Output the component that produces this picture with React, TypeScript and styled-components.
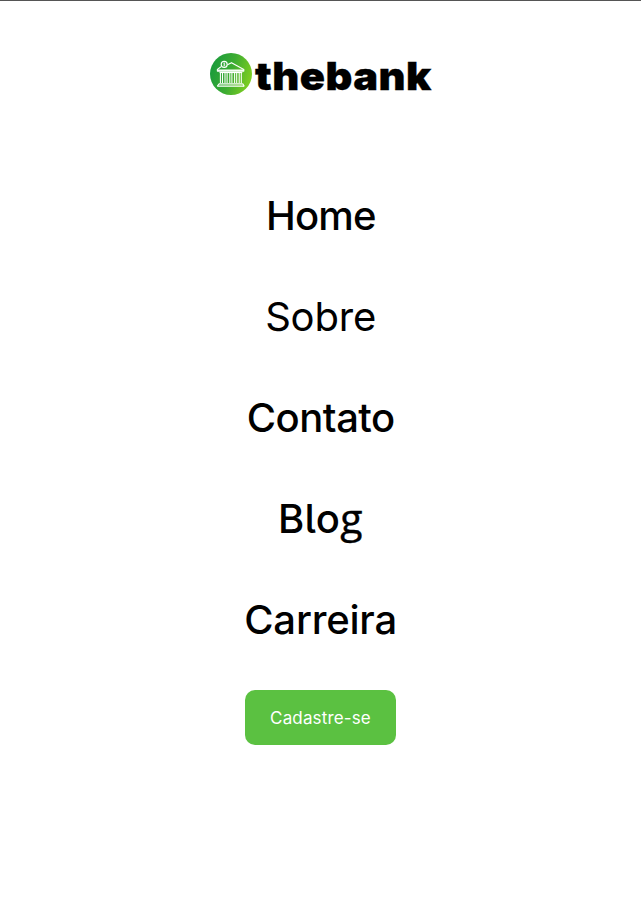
import React from "react";
import styled, { createGlobalStyle } from "styled-components";

const GlobalStyle = createGlobalStyle`
  * { box-sizing: border-box; }
  body {
    margin: 0;
    background: #fff;
    color: #000;
    font-family: Inter, "Liberation Sans", sans-serif;
  }
`;

const Page = styled.main`
  min-height: 910px;
  border-top: 1px solid #555;
  display: flex;
  flex-direction: column;
  align-items: center;
`;

const Brand = styled.a`
  display: flex;
  align-items: center;
  gap: 3px;
  width: 221px;
  height: 42px;
  margin-top: 52px;
  color: #000;
  text-decoration: none;
`;

const LogoIcon = styled.svg`
  display: block;
  flex: none;
  width: 42px;
  height: 42px;
`;

const BrandName = styled.span`
  font-size: 39px;
  font-weight: 900;
  line-height: 42px;
  letter-spacing: 0.4px;
  padding-top: 3px;
  transform: scaleX(1.068);
  transform-origin: left;
  -webkit-text-stroke: 0.3px #000;
`;

const Menu = styled.nav`
  display: flex;
  flex-direction: column;
  align-items: center;
  gap: 53px;
  margin-top: 97px;
`;

const MenuLink = styled.a<{ $weight: number; $spacing: number }>`
  color: #000;
  font-size: 40px;
  line-height: 48px;
  height: 48px;
  text-decoration: none;
  font-feature-settings: "cv05" 1;
  font-weight: ${(p) => p.$weight};
  letter-spacing: ${(p) => p.$spacing}px;
  margin-right: ${(p) => p.$spacing}px;
`;

/* Double-storey g, which the menu's main face does not have. */
const BinocularG = styled.span`
  font-family: "Open Sans", "Noto Sans", sans-serif;
  font-size: 41px;
  font-weight: 500;
  line-height: 1;
  -webkit-text-stroke: 0.4px #000;
`;

const SignUp = styled.button`
  width: 151px;
  height: 55px;
  margin-top: 46px;
  padding: 0;
  border: 0;
  border-radius: 10px;
  background: #5bc141;
  color: #fff;
  font: 400 17px/24px Inter, "Liberation Sans", sans-serif;
  letter-spacing: 0.15px;
`;

const links: { label: React.ReactNode; weight: number; spacing: number }[] = [
  { label: "Home", weight: 480, spacing: -0.8 },
  { label: "Sobre", weight: 400, spacing: -0.2 },
  { label: "Contato", weight: 480, spacing: -0.5 },
  { label: <>Blo<BinocularG>g</BinocularG></>, weight: 480, spacing: 0.3 },
  { label: "Carreira", weight: 480, spacing: -0.2 },
];

function BankLogo() {
  return (
    <LogoIcon viewBox="0 0 42 42" fill="none" aria-hidden="true">
      <defs>
        <linearGradient id="bank" x1="0" y1="0.3" x2="1" y2="0.6">
          <stop stopColor="#189a3c" />
          <stop offset="0.5" stopColor="#3dac32" />
          <stop offset="1" stopColor="#80cf20" />
        </linearGradient>
      </defs>
      <circle cx="21" cy="21" r="21" fill="url(#bank)" />
      <g stroke="#fff" strokeWidth="1.15" strokeLinejoin="round">
        <circle cx="14.2" cy="11.4" r="3" />
        <path d="M15.1 10.2h-1.3v1.1h1v1.3h-1.3M14.3 9.5v3.8" strokeWidth=".6" />
        <path d="M11 13.8 7.4 16.4v1.7h26.4v-1.7L21.5 9.7l-4 2" />
        <path d="M8 17.2h25.6" strokeWidth="1.4" />
        <path d="M9.5 19.5h22.8" />
        <path
          d="M10.4 20v10M12.5 20v10M15 20v10M17.1 20v10M19.8 20v10M21.9 20v10M24.6 20v10M26.7 20v10M29.2 20v10M31.3 20v10"
          strokeWidth="1.05"
        />
        <path d="M9 30.8h23.8M7.4 33.2h26.8" strokeWidth="1.2" />
        <path d="M9 30.8 7.4 33.2M32.8 30.8l1.4 2.4" />
      </g>
    </LogoIcon>
  );
}

export default function App() {
  return (
    <>
      <GlobalStyle />
      <Page>
        <Brand>
          <BankLogo />
          <BrandName>thebank</BrandName>
        </Brand>
        <Menu>
          {links.map((l, i) => (
            <MenuLink key={i} $weight={l.weight} $spacing={l.spacing}>
              {l.label}
            </MenuLink>
          ))}
        </Menu>
        <SignUp>Cadastre-se</SignUp>
      </Page>
    </>
  );
}
